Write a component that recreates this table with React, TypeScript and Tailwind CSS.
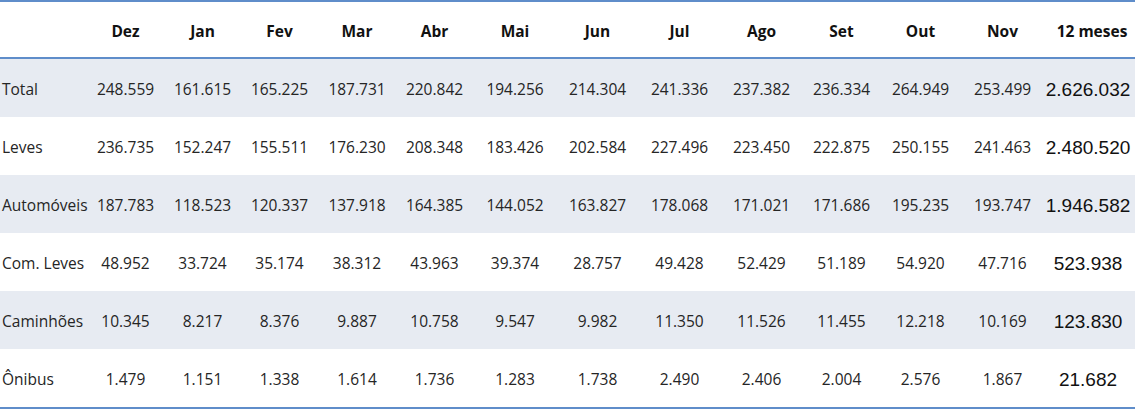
import React from 'react';

const months = ['Dez', 'Jan', 'Fev', 'Mar', 'Abr', 'Mai', 'Jun', 'Jul', 'Ago', 'Set', 'Out', 'Nov'];

const rows: { label: string; values: string[]; total: string }[] = [
  { label: 'Total', values: ['248.559', '161.615', '165.225', '187.731', '220.842', '194.256', '214.304', '241.336', '237.382', '236.334', '264.949', '253.499'], total: '2.626.032' },
  { label: 'Leves', values: ['236.735', '152.247', '155.511', '176.230', '208.348', '183.426', '202.584', '227.496', '223.450', '222.875', '250.155', '241.463'], total: '2.480.520' },
  { label: 'Automóveis', values: ['187.783', '118.523', '120.337', '137.918', '164.385', '144.052', '163.827', '178.068', '171.021', '171.686', '195.235', '193.747'], total: '1.946.582' },
  { label: 'Com. Leves', values: ['48.952', '33.724', '35.174', '38.312', '43.963', '39.374', '28.757', '49.428', '52.429', '51.189', '54.920', '47.716'], total: '523.938' },
  { label: 'Caminhões', values: ['10.345', '8.217', '8.376', '9.887', '10.758', '9.547', '9.982', '11.350', '11.526', '11.455', '12.218', '10.169'], total: '123.830' },
  { label: 'Ônibus', values: ['1.479', '1.151', '1.338', '1.614', '1.736', '1.283', '1.738', '2.490', '2.406', '2.004', '2.576', '1.867'], total: '21.682' },
];

const cols = 'grid grid-cols-[87px_77px_77px_77px_78px_77px_84px_81px_83px_81px_79px_79px_85px_90px]';

export default function App() {
  return (
    <div className="w-[1140px] h-[412px] bg-white font-['Open_Sans',sans-serif] text-[#252525]">
      <div className="w-[1135px] border-t-2 border-b-2 border-[#5f8dca]">
        <div className={`${cols} h-[57px] pt-1 items-center border-b-2 border-[#5f8dca] text-[15.5px] font-bold text-[#111]`}>
          <div />
          {months.map((m) => (
            <div key={m} className="text-center">{m}</div>
          ))}
          <div className="text-center pl-1">12 meses</div>
        </div>
        {rows.map((r, i) => (
          <div
            key={r.label}
            className={`${cols} h-[58px] pt-1 items-center text-[15.5px] ${i % 2 === 0 ? 'bg-[#e7ebf2]' : 'bg-white'}`}
          >
            <div className="pl-[2px] whitespace-nowrap">{r.label}</div>
            {r.values.map((v, j) => (
              <div key={j} className="text-center">{v}</div>
            ))}
            <div className="text-center pr-1 font-['Liberation_Sans',sans-serif] text-[19px] text-[#111]">{r.total}</div>
          </div>
        ))}
      </div>
    </div>
  );
}
